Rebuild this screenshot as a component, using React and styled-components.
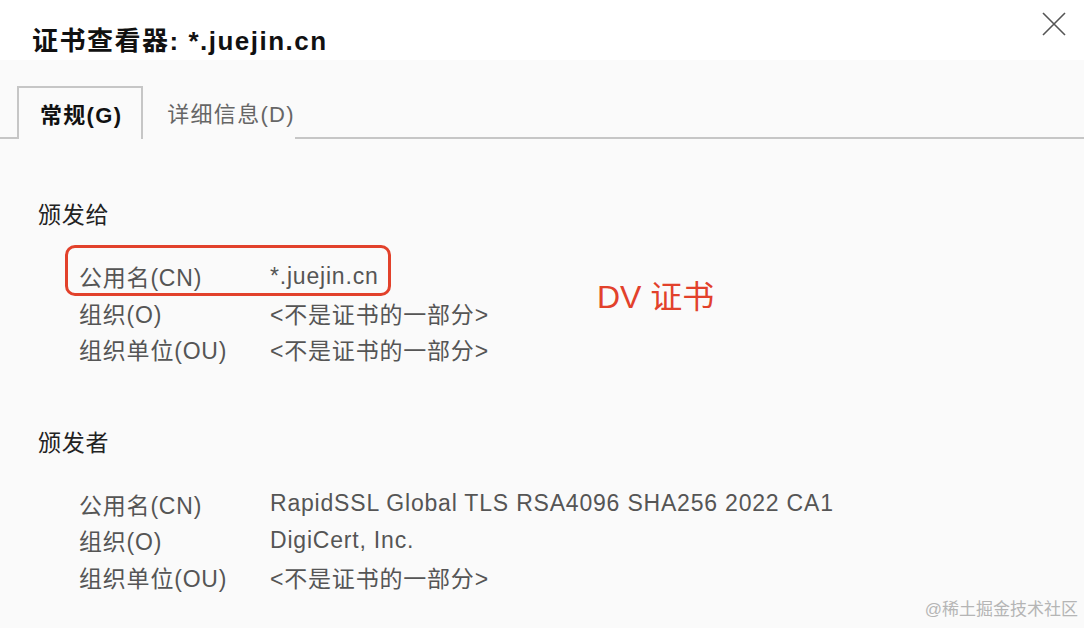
import React from 'react';
import styled, { createGlobalStyle } from 'styled-components';

const GlobalStyle = createGlobalStyle`
  html, body {
    margin: 0;
    padding: 0;
    background: #fafafa;
  }
  body {
    font-family: 'Liberation Sans', 'Noto Sans CJK SC', sans-serif;
  }
`;

// Dialog shell
const Dialog = styled.div`
  width: 1084px;
  height: 628px;
  position: relative;
  overflow: hidden;
  background: #fafafa;
`;

const Header = styled.div`
  height: 60px;
  background: #ffffff;
  display: flex;
  justify-content: space-between;
  align-items: flex-start;
  padding: 0 18px 0 32px;
  box-sizing: border-box;
`;

const Title = styled.h1`
  margin: 26px 0 0;
  font-size: 26px;
  letter-spacing: 1.5px;
  line-height: 30px;
  font-weight: 700;
  color: #111;
`;

const CloseButton = styled.button`
  margin-top: 12px;
  width: 24px;
  height: 24px;
  padding: 0;
  border: none;
  background: transparent;
  display: flex;
  align-items: center;
  justify-content: center;
  cursor: pointer;
`;

const Body = styled.div`
  padding-top: 26px;
`;

// Tabs
const TabBar = styled.div`
  display: flex;
  padding-left: 17px;
  border-bottom: 2px solid #c6c6c6;
  height: 51px;
`;

const Tab = styled.div`
  box-sizing: border-box;
  height: 53px;
  display: flex;
  align-items: center;
  font-size: 22px;
  letter-spacing: 1.3px;
  padding: ${p => (p.active ? '0 19px 2px 21px' : '0 0 2px 24px')};
  font-weight: ${p => (p.active ? 700 : 400)};
  color: ${p => (p.active ? '#111' : '#666')};
  background: #fafafa;
  border: ${p => (p.active ? '2px solid #c6c6c6' : 'none')};
  border-bottom: none;
`;

// Content
const Content = styled.div`
  padding-left: 38px;
`;

const Section = styled.section`
  margin-top: ${p => p.gap}px;
`;

const SectionTitle = styled.h2`
  margin: 0 0 28px;
  font-size: 23px;
  letter-spacing: 0.8px;
  line-height: 30px;
  font-weight: 400;
  color: #222;
`;

const Row = styled.div`
  position: relative;
  display: flex;
  padding-left: 41px;
  height: 36.5px;
  align-items: center;
  font-size: 23px;
  letter-spacing: 0.8px;
  color: #555;
`;

const Label = styled.div`
  width: 191px;
  flex-shrink: 0;
`;

const Value = styled.div`
  white-space: nowrap;
`;

// Annotations drawn on top of the screenshot
const Highlight = styled.div`
  position: absolute;
  left: 27px;
  top: -13px;
  width: 326px;
  height: 51px;
  box-sizing: border-box;
  border: 3.5px solid #e2412b;
  border-radius: 10px;
`;

const Note = styled.div`
  position: absolute;
  left: 559px;
  top: 23px;
  font-size: 32px;
  letter-spacing: 0;
  line-height: 32px;
  color: #e2412b;
  white-space: nowrap;
`;

const Watermark = styled.div`
  position: absolute;
  right: 6px;
  bottom: 8px;
  font-size: 17px;
  color: #b5b5b5;
`;

const CloseIcon = () => (
  <svg width="24" height="24" viewBox="0 0 24 24">
    <path d="M1 1 L23 23 M23 1 L1 23" stroke="#555" strokeWidth="1.6" fill="none" />
  </svg>
);

const NOT_PART = '<不是证书的一部分>';

const issuedTo = [
  { label: '公用名(CN)', value: '*.juejin.cn', mark: true },
  { label: '组织(O)', value: NOT_PART },
  { label: '组织单位(OU)', value: NOT_PART },
];

const issuedBy = [
  { label: '公用名(CN)', value: 'RapidSSL Global TLS RSA4096 SHA256 2022 CA1' },
  { label: '组织(O)', value: 'DigiCert, Inc.' },
  { label: '组织单位(OU)', value: NOT_PART },
];

const FieldRows = ({ rows }) =>
  rows.map(r => (
    <Row key={r.label}>
      <Label>{r.label}</Label>
      <Value>{r.value}</Value>
      {r.mark && (
        <>
          <Highlight />
          <Note>DV 证书</Note>
        </>
      )}
    </Row>
  ));

const App = () => {
  return (
    <Dialog>
      <GlobalStyle />
      <Header>
        <Title>证书查看器: *.juejin.cn</Title>
        <CloseButton aria-label="关闭">
          <CloseIcon />
        </CloseButton>
      </Header>
      <Body>
        <TabBar>
          <Tab active>常规(G)</Tab>
          <Tab>详细信息(D)</Tab>
        </TabBar>
        <Content>
          <Section gap={61}>
            <SectionTitle>颁发给</SectionTitle>
            <FieldRows rows={issuedTo} />
          </Section>
          <Section gap={60}>
            <SectionTitle>颁发者</SectionTitle>
            <FieldRows rows={issuedBy} />
          </Section>
        </Content>
      </Body>
      <Watermark>@稀土掘金技术社区</Watermark>
    </Dialog>
  );
};

export default App;
